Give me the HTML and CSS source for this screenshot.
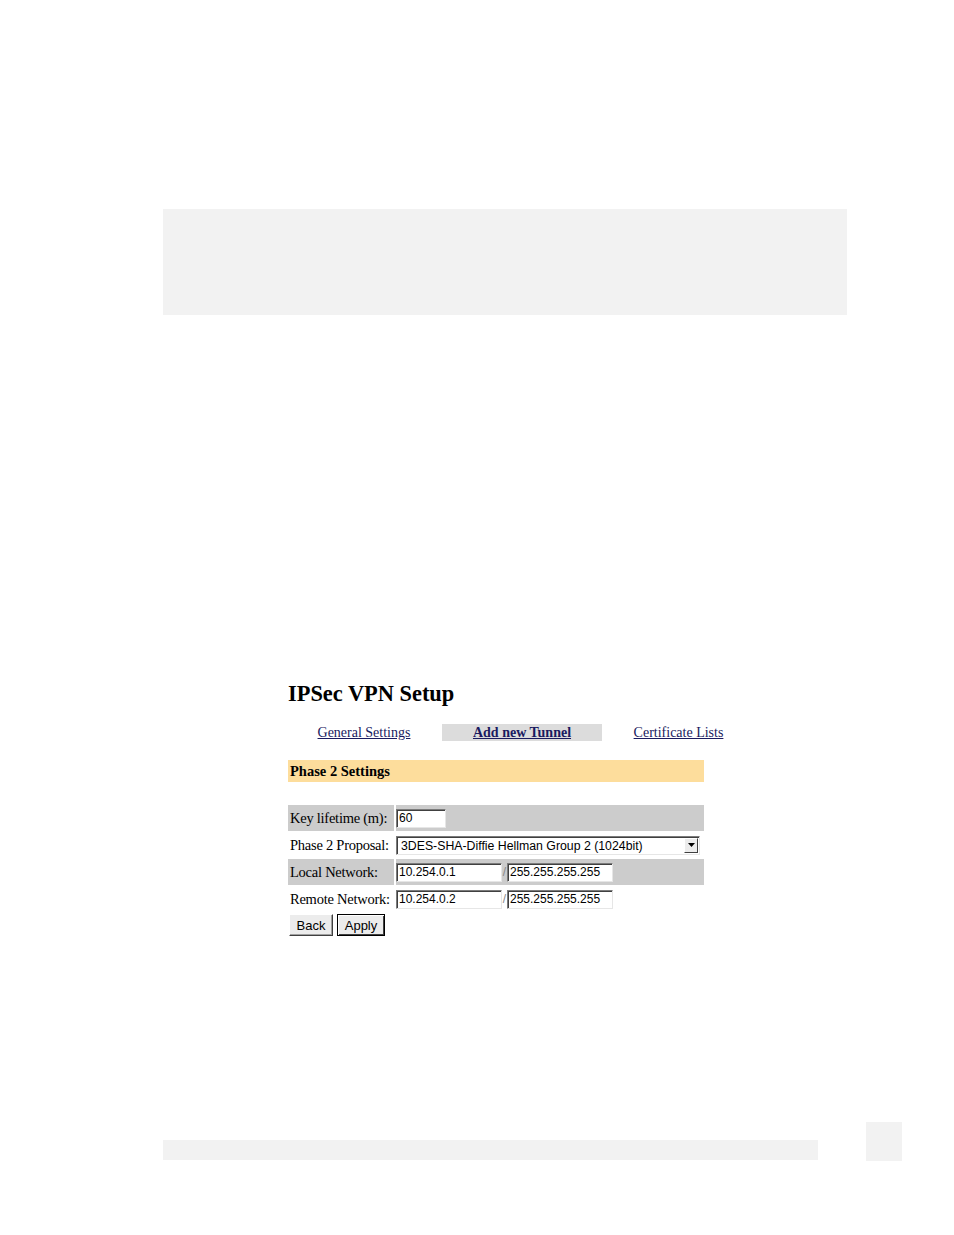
FILE: index.html
```html
<!DOCTYPE html>
<html>
<head>
<meta charset="utf-8">
<link rel="stylesheet" href="styles.css">
</head>
<body>
<div class="topband"></div>
<div class="page">
  <h1 class="title">IPSec VPN Setup</h1>
  <div class="tabs">
    <div class="tab tab-1"><a href="#">General Settings</a></div>
    <div class="tab tab-2 active"><a href="#">Add new Tunnel</a></div>
    <div class="tab tab-3"><a href="#">Certificate Lists</a></div>
  </div>
  <div class="section-head">Phase 2 Settings</div>
  <div class="form">
    <div class="row shaded">
      <div class="label">Key lifetime (m):</div>
      <div class="field"><input class="txt txt-short" type="text" value="60"></div>
    </div>
    <div class="row">
      <div class="label">Phase 2 Proposal:</div>
      <div class="field">
        <span class="select-wrap">
          <select class="sel"><option>3DES-SHA-Diffie Hellman Group 2 (1024bit)</option></select>
          <span class="sel-btn"><svg width="7" height="4" viewBox="0 0 7 4"><path d="M0 0H7L3.5 4Z" fill="#000"/></svg></span>
        </span>
      </div>
    </div>
    <div class="row shaded">
      <div class="label">Local Network:</div>
      <div class="field"><input class="txt txt-ip" type="text" value="10.254.0.1"><span class="slash">/</span><input class="txt txt-ip" type="text" value="255.255.255.255"></div>
    </div>
    <div class="row">
      <div class="label">Remote Network:</div>
      <div class="field"><input class="txt txt-ip" type="text" value="10.254.0.2"><span class="slash">/</span><input class="txt txt-ip" type="text" value="255.255.255.255"></div>
    </div>
  </div>
  <div class="buttons">
    <button class="btn btn-back">Back</button>
    <button class="btn btn-apply">Apply</button>
  </div>
</div>
<div class="footer">
  <div class="footbar"></div>
  <div class="footbox"></div>
</div>
</body>
</html>
```
FILE: styles.css
```css
html, body {
  margin: 0;
  padding: 0;
  background: #ffffff;
}
body {
  font-family: "Liberation Serif", "Times New Roman", serif;
  color: #000;
  width: 954px;
  height: 1235px;
  overflow: hidden;
}
.topband {
  margin: 209px 0 0 163px;
  width: 684px;
  height: 106px;
  background: #f2f2f2;
}
.page {
  padding-left: 288px;
}
.title {
  margin: 367px 0 0 0;
  font-size: 22.4px;
  line-height: 24px;
  height: 24px;
  font-weight: bold;
}
.tabs {
  display: flex;
  gap: 2px;
  margin-top: 18px;
  height: 17px;
}
.tab {
  height: 17px;
  line-height: 18px;
  font-size: 14px;
  text-align: center;
}
.tab a {
  color: #1a1a60;
  text-decoration: underline;
}
.tab-1 { width: 152px; }
.tab-2 { width: 160px; background: #dcdcdc; font-weight: bold; }
.tab-3 { width: 149px; }
.section-head {
  margin-top: 19px;
  width: 414px;
  height: 22px;
  line-height: 22px;
  padding-left: 2px;
  background: #fddd9c;
  font-size: 14.5px;
  font-weight: bold;
}
.form {
  margin-top: 23px;
  width: 416px;
  display: flex;
  flex-direction: column;
  gap: 1px;
}
.row {
  display: flex;
  gap: 2px;
  height: 26px;
}
.label {
  width: 104px;
  padding-left: 2px;
  font-size: 14.5px;
  line-height: 26px;
  white-space: nowrap;
  letter-spacing: -0.25px;
}
.field {
  flex: 1;
  display: flex;
  align-items: center;
}
.shaded .label, .shaded .field {
  background: #cccccc;
}
.txt {
  box-sizing: border-box;
  height: 19px;
  margin: 0;
  padding: 0 2px;
  font-family: "Liberation Sans", Arial, sans-serif;
  font-size: 12px;
  color: #000;
  background: #fff;
  border: 1px solid;
  border-color: #7b7b7b #e6e6e6 #e6e6e6 #7b7b7b;
  box-shadow: inset 1px 1px 0 #404040;
  outline: none;
}
.txt-short { width: 50px; }
.txt-ip { width: 106px; }
.slash {
  font-family: "Liberation Sans", Arial, sans-serif;
  font-size: 12px;
  color: #888;
  width: 5px;
  text-align: center;
}
.select-wrap {
  position: relative;
  display: inline-block;
  width: 304px;
  height: 19px;
}
.sel {
  -webkit-appearance: none;
  appearance: none;
  box-sizing: border-box;
  width: 304px;
  height: 19px;
  margin: 0;
  padding: 0 0 0 4px;
  font-family: "Liberation Sans", Arial, sans-serif;
  font-size: 12.3px;
  color: #000;
  background: #fff;
  border: 1px solid;
  border-color: #7b7b7b #e6e6e6 #e6e6e6 #7b7b7b;
  box-shadow: inset 1px 1px 0 #404040;
  border-radius: 0;
  outline: none;
}
.sel-btn {
  position: absolute;
  right: 2px;
  top: 2px;
  width: 14px;
  height: 15px;
  box-sizing: border-box;
  background: #ececec;
  border: 1px solid;
  border-color: #fff #404040 #404040 #fff;
  display: flex;
  align-items: center;
  justify-content: center;
}
.buttons {
  margin-top: 2px;
  display: flex;
  gap: 4px;
  padding-left: 1px;
}
.btn {
  box-sizing: border-box;
  height: 22px;
  margin: 0;
  padding: 0;
  font-family: "Liberation Sans", Arial, sans-serif;
  font-size: 13px;
  color: #000;
  background: #ececec;
  border: 1px solid;
  border-color: #fff #404040 #404040 #fff;
  box-shadow: inset -1px -1px 0 #a0a0a0;
  border-radius: 0;
}
.btn-back { width: 44px; }
.btn-apply {
  width: 48px;
  border: 1px solid #000;
  box-shadow: inset 1px 1px 0 #fff, inset -1px -1px 0 #404040;
}
.footer {
  margin-top: 186px;
  padding-left: 163px;
  display: flex;
  align-items: flex-start;
}
.footbar {
  margin-top: 18px;
  width: 655px;
  height: 20px;
  background: #f2f2f2;
}
.footbox {
  margin-left: 48px;
  width: 36px;
  height: 39px;
  background: #f2f2f2;
}
```
